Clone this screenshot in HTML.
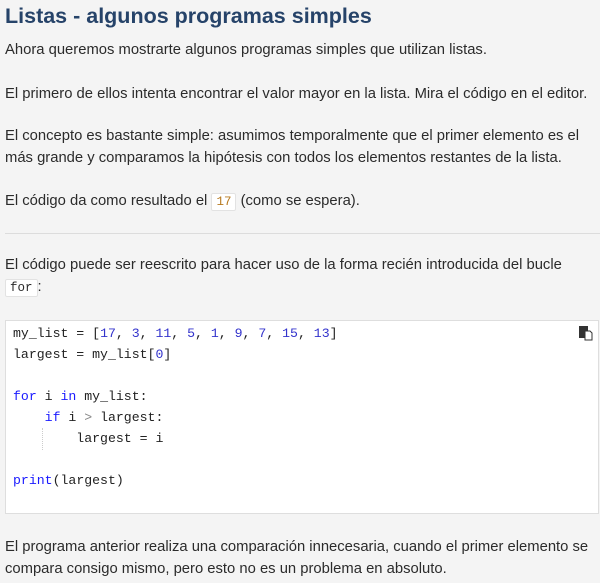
<!DOCTYPE html>
<html><head><meta charset="utf-8"><style>
body{margin:0;background:#f4f4f4;width:600px;height:583px;overflow:hidden;font-family:"Liberation Sans",sans-serif;color:#2b2b2b;font-size:14.8px;}
.t{position:absolute;left:5px;white-space:nowrap;}
h1{position:absolute;left:5px;top:4px;margin:0;font-size:21.5px;font-weight:bold;color:#264369;}
code.i{font-family:"Liberation Mono",monospace;font-size:12.5px;background:#fff;border:1px solid #e2e2e2;padding:1px 4px;border-radius:2px;}
.hr{position:absolute;left:5px;width:595px;top:233px;height:1px;background:#dcdcdc;}
.code{position:absolute;left:5px;top:320px;width:592px;height:192px;background:#fff;border:1px solid #dedede;}
.code pre{margin:0;position:absolute;left:7px;top:2px;font-family:"Liberation Mono",monospace;font-size:13.2px;line-height:21px;color:#222;}
.n{color:#3333cc}.k{color:#1a1aff}.o{color:#888}
</style></head><body>
<h1>Listas - algunos programas simples</h1>
<div class="t" style="top:42px">Ahora queremos mostrarte algunos programas simples que utilizan listas.</div>
<div class="t" style="top:86px">El primero de ellos intenta encontrar el valor mayor en la lista. Mira el código en el editor.</div>
<div class="t" style="top:128px">El concepto es bastante simple: asumimos temporalmente que el primer elemento es el</div>
<div class="t" style="top:150px">más grande y comparamos la hipótesis con todos los elementos restantes de la lista.</div>
<div class="t" style="top:193px">El código da como resultado el <code class="i" style="color:#b7791f">17</code> (como se espera).</div>
<div class="hr"></div>
<div class="t" style="top:257px">El código puede ser reescrito para hacer uso de la forma recién introducida del bucle</div>
<div class="t" style="top:279px"><code class="i">for</code>:</div>
<div class="code"><pre>my_list = [<span class="n">17</span>, <span class="n">3</span>, <span class="n">11</span>, <span class="n">5</span>, <span class="n">1</span>, <span class="n">9</span>, <span class="n">7</span>, <span class="n">15</span>, <span class="n">13</span>]
largest = my_list[<span class="n">0</span>]

<span class="k">for</span> i <span class="k">in</span> my_list:
    <span class="k">if</span> i <span class="o">&gt;</span> largest:
        largest = i

<span class="k">print</span>(largest)</pre>
<div style="position:absolute;left:36px;top:107px;width:0;height:22px;border-left:1px dotted #ccc"></div>
<svg style="position:absolute;right:5px;top:5px" width="14" height="15" viewBox="0 0 14 15"><rect x="0" y="0" width="9" height="12" fill="#333"/><path d="M6 5h5l2 2v7H6z" fill="#fff" stroke="#333" stroke-width="1"/></svg>
</div>
<div class="t" style="top:539px">El programa anterior realiza una comparación innecesaria, cuando el primer elemento se</div>
<div class="t" style="top:561px">compara consigo mismo, pero esto no es un problema en absoluto.</div>
</body></html>
